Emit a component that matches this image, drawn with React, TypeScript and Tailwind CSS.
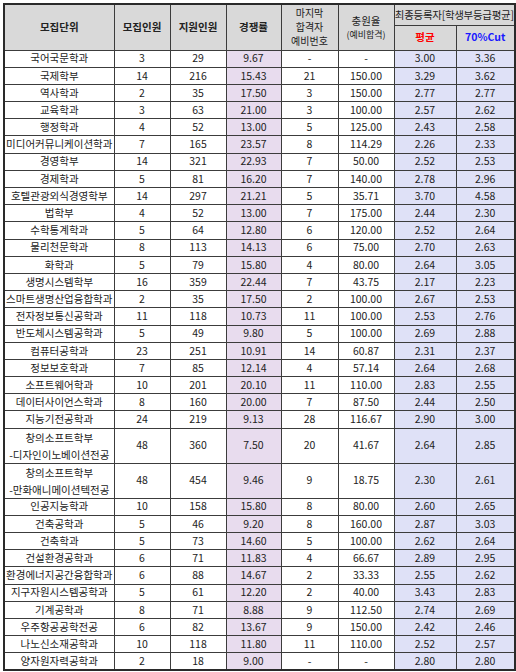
type Row = {
  name: string[];
  quota: string;
  applicants: string;
  ratio: string;
  waitNo: string;
  fillRate: string;
  avg: string;
  cut70: string;
};

const ROWS: Row[] = [
  { name: ["국어국문학과"], quota: "3", applicants: "29", ratio: "9.67", waitNo: "-", fillRate: "-", avg: "3.00", cut70: "3.36" },
  { name: ["국제학부"], quota: "14", applicants: "216", ratio: "15.43", waitNo: "21", fillRate: "150.00", avg: "3.29", cut70: "3.62" },
  { name: ["역사학과"], quota: "2", applicants: "35", ratio: "17.50", waitNo: "3", fillRate: "150.00", avg: "2.77", cut70: "2.77" },
  { name: ["교육학과"], quota: "3", applicants: "63", ratio: "21.00", waitNo: "3", fillRate: "100.00", avg: "2.57", cut70: "2.62" },
  { name: ["행정학과"], quota: "4", applicants: "52", ratio: "13.00", waitNo: "5", fillRate: "125.00", avg: "2.43", cut70: "2.58" },
  { name: ["미디어커뮤니케이션학과"], quota: "7", applicants: "165", ratio: "23.57", waitNo: "8", fillRate: "114.29", avg: "2.26", cut70: "2.33" },
  { name: ["경영학부"], quota: "14", applicants: "321", ratio: "22.93", waitNo: "7", fillRate: "50.00", avg: "2.52", cut70: "2.53" },
  { name: ["경제학과"], quota: "5", applicants: "81", ratio: "16.20", waitNo: "7", fillRate: "140.00", avg: "2.78", cut70: "2.96" },
  { name: ["호텔관광외식경영학부"], quota: "14", applicants: "297", ratio: "21.21", waitNo: "5", fillRate: "35.71", avg: "3.70", cut70: "4.58" },
  { name: ["법학부"], quota: "4", applicants: "52", ratio: "13.00", waitNo: "7", fillRate: "175.00", avg: "2.44", cut70: "2.30" },
  { name: ["수학통계학과"], quota: "5", applicants: "64", ratio: "12.80", waitNo: "6", fillRate: "120.00", avg: "2.52", cut70: "2.64" },
  { name: ["물리천문학과"], quota: "8", applicants: "113", ratio: "14.13", waitNo: "6", fillRate: "75.00", avg: "2.70", cut70: "2.63" },
  { name: ["화학과"], quota: "5", applicants: "79", ratio: "15.80", waitNo: "4", fillRate: "80.00", avg: "2.64", cut70: "3.05" },
  { name: ["생명시스템학부"], quota: "16", applicants: "359", ratio: "22.44", waitNo: "7", fillRate: "43.75", avg: "2.17", cut70: "2.23" },
  { name: ["스마트생명산업융합학과"], quota: "2", applicants: "35", ratio: "17.50", waitNo: "2", fillRate: "100.00", avg: "2.67", cut70: "2.53" },
  { name: ["전자정보통신공학과"], quota: "11", applicants: "118", ratio: "10.73", waitNo: "11", fillRate: "100.00", avg: "2.53", cut70: "2.76" },
  { name: ["반도체시스템공학과"], quota: "5", applicants: "49", ratio: "9.80", waitNo: "5", fillRate: "100.00", avg: "2.69", cut70: "2.88" },
  { name: ["컴퓨터공학과"], quota: "23", applicants: "251", ratio: "10.91", waitNo: "14", fillRate: "60.87", avg: "2.31", cut70: "2.37" },
  { name: ["정보보호학과"], quota: "7", applicants: "85", ratio: "12.14", waitNo: "4", fillRate: "57.14", avg: "2.64", cut70: "2.68" },
  { name: ["소프트웨어학과"], quota: "10", applicants: "201", ratio: "20.10", waitNo: "11", fillRate: "110.00", avg: "2.83", cut70: "2.55" },
  { name: ["데이터사이언스학과"], quota: "8", applicants: "160", ratio: "20.00", waitNo: "7", fillRate: "87.50", avg: "2.44", cut70: "2.50" },
  { name: ["지능기전공학과"], quota: "24", applicants: "219", ratio: "9.13", waitNo: "28", fillRate: "116.67", avg: "2.90", cut70: "3.00" },
  { name: ["창의소프트학부", "-디자인이노베이션전공"], quota: "48", applicants: "360", ratio: "7.50", waitNo: "20", fillRate: "41.67", avg: "2.64", cut70: "2.85" },
  { name: ["창의소프트학부", "-만화애니메이션텍전공"], quota: "48", applicants: "454", ratio: "9.46", waitNo: "9", fillRate: "18.75", avg: "2.30", cut70: "2.61" },
  { name: ["인공지능학과"], quota: "10", applicants: "158", ratio: "15.80", waitNo: "8", fillRate: "80.00", avg: "2.60", cut70: "2.65" },
  { name: ["건축공학과"], quota: "5", applicants: "46", ratio: "9.20", waitNo: "8", fillRate: "160.00", avg: "2.87", cut70: "3.03" },
  { name: ["건축학과"], quota: "5", applicants: "73", ratio: "14.60", waitNo: "5", fillRate: "100.00", avg: "2.62", cut70: "2.64" },
  { name: ["건설환경공학과"], quota: "6", applicants: "71", ratio: "11.83", waitNo: "4", fillRate: "66.67", avg: "2.89", cut70: "2.95" },
  { name: ["환경에너지공간융합학과"], quota: "6", applicants: "88", ratio: "14.67", waitNo: "2", fillRate: "33.33", avg: "2.55", cut70: "2.62" },
  { name: ["지구자원시스템공학과"], quota: "5", applicants: "61", ratio: "12.20", waitNo: "2", fillRate: "40.00", avg: "3.43", cut70: "2.83" },
  { name: ["기계공학과"], quota: "8", applicants: "71", ratio: "8.88", waitNo: "9", fillRate: "112.50", avg: "2.74", cut70: "2.69" },
  { name: ["우주항공공학전공"], quota: "6", applicants: "82", ratio: "13.67", waitNo: "9", fillRate: "150.00", avg: "2.42", cut70: "2.46" },
  { name: ["나노신소재공학과"], quota: "10", applicants: "118", ratio: "11.80", waitNo: "11", fillRate: "110.00", avg: "2.52", cut70: "2.57" },
  { name: ["양자원자력공학과"], quota: "2", applicants: "18", ratio: "9.00", waitNo: "-", fillRate: "-", avg: "2.80", cut70: "2.80" },
];

const cell = "border border-[#3c3c3c] p-0 text-center align-middle";

export default function App() {
  return (
    <div
      className="w-[516px] h-[672px] overflow-hidden bg-white pl-[3px] pt-[3px] text-[#222]"
      style={{ fontFamily: '"Noto Sans CJK KR", "Noto Sans", sans-serif' }}
    >
      <table className="table-fixed border-collapse border-2 border-[#2a2a2a] w-[511px] text-[10.5px] leading-none">
        <colgroup>
          <col className="w-[110px]" />
          <col className="w-[56px]" />
          <col className="w-[56px]" />
          <col className="w-[55px]" />
          <col className="w-[57px]" />
          <col className="w-[56px]" />
          <col className="w-[62px]" />
          <col className="w-[59px]" />
        </colgroup>
        <thead className="bg-[#d9d9d9] font-bold">
          <tr className="h-[21px]">
            <th rowSpan={2} className={cell}>모집단위</th>
            <th rowSpan={2} className={cell}>모집인원</th>
            <th rowSpan={2} className={cell}>지원인원</th>
            <th rowSpan={2} className={cell}>경쟁률</th>
            <th rowSpan={2} className={`${cell} font-normal text-[10px] leading-[14px]`}>
              마지막
              <br />
              합격자
              <br />
              예비번호
            </th>
            <th rowSpan={2} className={`${cell} font-normal`}>
              <div className="leading-[15px]">충원율</div>
              <div className="text-[9px] leading-[13px]">(예비합격)</div>
            </th>
            <th colSpan={2} className={`${cell} font-normal text-[10.5px] tracking-[-0.3px]`}>
              최종등록자[학생부등급평균]
            </th>
          </tr>
          <tr className="h-[25px]">
            <th className={`${cell} text-[#ff0000]`}>평균</th>
            <th className={`${cell} text-[#1a1aff]`}>70%Cut</th>
          </tr>
        </thead>
        <tbody>
          {ROWS.map((r) => {
            const tall = r.name.length > 1;
            return (
              <tr key={r.name.join("")} className={tall ? "h-[34.4px]" : "h-[17.2px]"}>
                <td className={`${cell} ${tall ? "leading-[17px]" : ""}`}>
                  {r.name.map((n) => (
                    <div key={n}>{n}</div>
                  ))}
                </td>
                <td className={cell}>{r.quota}</td>
                <td className={cell}>{r.applicants}</td>
                <td className={`${cell} bg-[#e8dcee]`}>{r.ratio}</td>
                <td className={cell}>{r.waitNo}</td>
                <td className={cell}>{r.fillRate}</td>
                <td className={`${cell} bg-[#dfe1f7]`}>{r.avg}</td>
                <td className={`${cell} bg-[#dfe1f7]`}>{r.cut70}</td>
              </tr>
            );
          })}
        </tbody>
      </table>
    </div>
  );
}
